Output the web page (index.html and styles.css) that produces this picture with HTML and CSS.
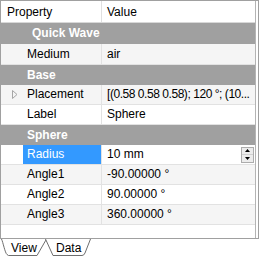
FILE: index.html
```html
<!DOCTYPE html>
<html lang="en">
<head>
    <meta charset="UTF-8">
    <title>Property view</title>
    <link rel="stylesheet" href="styles.css">
</head>
<body>
    <div class="panel">
        <div class="tree">
            <div class="head">
                <div class="head-name">Property</div>
                <div class="head-value">Value</div>
            </div>

            <div class="group tall group-first">Quick Wave</div>
            <div class="row tall alt">
                <div class="indent"></div>
                <div class="name">Medium</div>
                <div class="value">air</div>
            </div>

            <div class="group">Base</div>
            <div class="row alt">
                <div class="indent">
                    <svg width="6" height="9" viewBox="0 0 6 9"><path d="M0.5 0.5 L5 4.5 L0.5 8.5 Z" fill="none" stroke="#a6a6a6" stroke-width="1"/></svg>
                </div>
                <div class="name">Placement</div>
                <div class="value value-long">[(0.58 0.58 0.58); 120 °; (10...</div>
            </div>
            <div class="row">
                <div class="indent"></div>
                <div class="name">Label</div>
                <div class="value">Sphere</div>
            </div>

            <div class="group">Sphere</div>
            <div class="row">
                <div class="indent"></div>
                <div class="name selected">Radius</div>
                <div class="value">
                    <span class="value-text">10 mm</span>
                    <div class="spin">
                        <div class="spin-btn"><svg width="5" height="3" viewBox="0 0 5 3"><path d="M0 3 L2.5 0 L5 3 Z" fill="#000"/></svg></div>
                        <div class="spin-btn"><svg width="5" height="3" viewBox="0 0 5 3"><path d="M0 0 L2.5 3 L5 0 Z" fill="#000"/></svg></div>
                    </div>
                </div>
            </div>
            <div class="row alt">
                <div class="indent"></div>
                <div class="name">Angle1</div>
                <div class="value">-90.00000 °</div>
            </div>
            <div class="row">
                <div class="indent"></div>
                <div class="name">Angle2</div>
                <div class="value">90.00000 °</div>
            </div>
            <div class="row alt">
                <div class="indent"></div>
                <div class="name">Angle3</div>
                <div class="value">360.00000 °</div>
            </div>
        </div>
    </div>

    <div class="tabs">
        <div class="tab">
            <svg class="tab-shape" width="48" height="18" viewBox="0 0 48 18"><path d="M1.5 0 C3 3 5 14 7 15.5 L8.5 16.5 L37 16.5 L46.5 0" fill="#fff" stroke="#6e6e6e"/></svg>
            <span class="tab-label">View</span>
        </div>
        <div class="tab tab-active">
            <svg class="tab-shape" width="48" height="18" viewBox="0 0 48 18"><path d="M1.5 0 L9 16.5 L38 16.5 Q40 16.5 41 14 L46.5 0" fill="#fff" stroke="#6e6e6e"/></svg>
            <span class="tab-label">Data</span>
        </div>
    </div>
</body>
</html>
```

FILE: styles.css
```css
* {
    box-sizing: border-box;
}

body {
    margin: 0;
    font-family: "Liberation Sans", Arial, sans-serif;
    font-size: 12px;
    color: #000;
    background: #fff;
}

.panel {
    width: 259px;
    height: 239px;
    border: 1px solid #a0a0a0;
    padding-right: 2px;
}

.tree {
    height: 100%;
    border-right: 1px solid #b4b4b4;
    overflow: hidden;
}

/* header */
.head {
    display: flex;
    height: 22px;
    border-bottom: 1px solid #d8d8d8;
    line-height: 17px;
    padding-top: 3px;
}

.head-name {
    width: 101px;
    padding-left: 6px;
    border-right: 1px solid #e0e0e0;
    margin-top: -3px;
    padding-top: 3px;
}

.head-value {
    padding-left: 5px;
}

/* group rows */
.group {
    height: 20px;
    line-height: 20px;
    background: #a0a0a0;
    color: #fff;
    font-weight: bold;
    padding-left: 26px;
}

.group-first {
    padding-left: 31px;
}

/* property rows */
.row {
    display: flex;
    height: 20px;
    line-height: 19px;
    border-bottom: 1px solid #e2e2e2;
    background: #fff;
}

.row.alt {
    background: #f5f5f5;
}

.tall {
    height: 21px;
    line-height: 21px;
}

.row.tall {
    line-height: 20px;
}

.indent {
    width: 22px;
    padding-left: 11px;
    display: flex;
    align-items: center;
}

.name {
    width: 79px;
    padding-left: 4px;
    border-right: 1px solid #e2e2e2;
    white-space: nowrap;
}

.name.selected {
    background: #3399ff;
    color: #fff;
}

.value {
    flex: 1;
    display: flex;
    align-items: center;
    padding-left: 5px;
    white-space: nowrap;
    overflow: hidden;
}

.value-long {
    letter-spacing: -0.45px;
}

.value-text {
    flex: 1;
}

.spin {
    width: 13px;
    height: 16px;
    margin-right: 1px;
    border: 1px solid #acacac;
    display: flex;
    flex-direction: column;
}

.spin-btn {
    flex: 1;
    display: flex;
    align-items: center;
    justify-content: center;
    background: #ececec;
}

.spin-btn + .spin-btn {
    border-top: 1px solid #d0d0d0;
}

/* tabs */
.tabs {
    display: flex;
    height: 19px;
}

.tab {
    position: relative;
    width: 48px;
    height: 18px;
}

.tab-active {
    margin-left: -4px;
}

.tab-shape {
    position: absolute;
    top: 0;
    left: 0;
}

.tab-label {
    position: relative;
    display: block;
    line-height: 16px;
    padding-top: 1px;
    padding-left: 11px;
}

.tab-active .tab-label {
    padding-left: 12px;
}
```
